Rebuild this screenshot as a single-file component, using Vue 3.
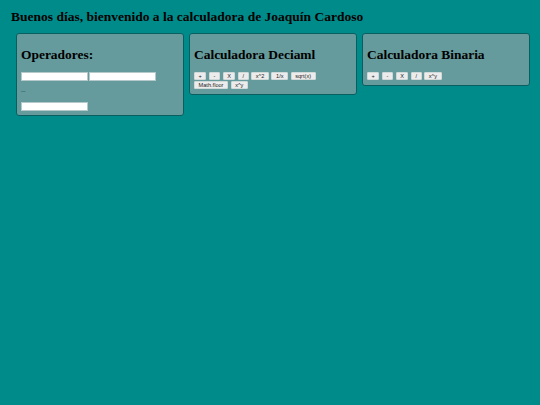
<template>
  <div class="page">
    <h1 class="title">Buenos días, bienvenido a la calculadora de Joaquín Cardoso</h1>
    <div class="cards">
      <section class="card">
        <h2>Operadores:</h2>
        <div class="inputs">
          <input class="field" type="text" />
          <input class="field" type="text" />
        </div>
        <div class="dash">–</div>
        <input class="field" type="text" />
      </section>
      <section class="card">
        <h2>Calculadora Deciaml</h2>
        <div class="buttons">
          <button v-for="op in decimalOps" :key="op" class="btn">{{ op }}</button>
        </div>
      </section>
      <section class="card">
        <h2>Calculadora Binaria</h2>
        <div class="buttons">
          <button v-for="op in binaryOps" :key="op" class="btn">{{ op }}</button>
        </div>
      </section>
    </div>
  </div>
</template>

<script setup>
// operaciones de cada calculadora
const decimalOps = ['+', '-', 'X', '/', 'x^2', '1/x', 'sqrt(x)', 'Math.floor', 'x^y']
const binaryOps = ['+', '-', 'X', '/', 'x^y']
</script>

<style>
html,
body {
  margin: 0;
  background: #008b8b;
}
</style>

<style scoped>
.page {
  min-height: 405px;
  box-sizing: border-box;
  padding: 10px 10px 0 11px;
  background: #008b8b;
  font-family: "Liberation Serif", serif;
  color: #000;
}

.title {
  margin: 0;
  font-size: 13.5px;
  line-height: 14px;
  font-weight: bold;
}

.cards {
  display: flex;
  align-items: flex-start;
  gap: 5px;
  margin: 9px 0 0 5px;
}

.card {
  box-sizing: border-box;
  width: 168px;
  padding: 13px 4px 4px;
  background: #659b9c;
  border: 1px solid #0b5e60;
  border-radius: 3px;
}

.card h2 {
  margin: 0 0 9px;
  font-size: 13.45px;
  line-height: 16px;
  font-weight: bold;
}

.inputs {
  display: flex;
  gap: 1px;
}

.field {
  box-sizing: border-box;
  display: block;
  width: 67px;
  height: 9px;
  padding: 0;
  background: #fff;
  border: 1px solid #b5c9ca;
  border-radius: 0;
}

.dash {
  height: 21px;
  font-family: "Liberation Sans", sans-serif;
  font-size: 8px;
  line-height: 19px;
  color: #33616a;
}

.buttons {
  display: flex;
  flex-wrap: wrap;
  gap: 1px 2.5px;
  padding: 0 4px 1px 0;
}

.btn {
  box-sizing: border-box;
  height: 8px;
  padding: 0 3.6px;
  background: #ececec;
  border: 1px solid #d0d8d8;
  border-radius: 1px;
  font-family: "Liberation Sans", sans-serif;
  font-size: 5.6px;
  line-height: 6px;
  color: #222;
}
</style>
